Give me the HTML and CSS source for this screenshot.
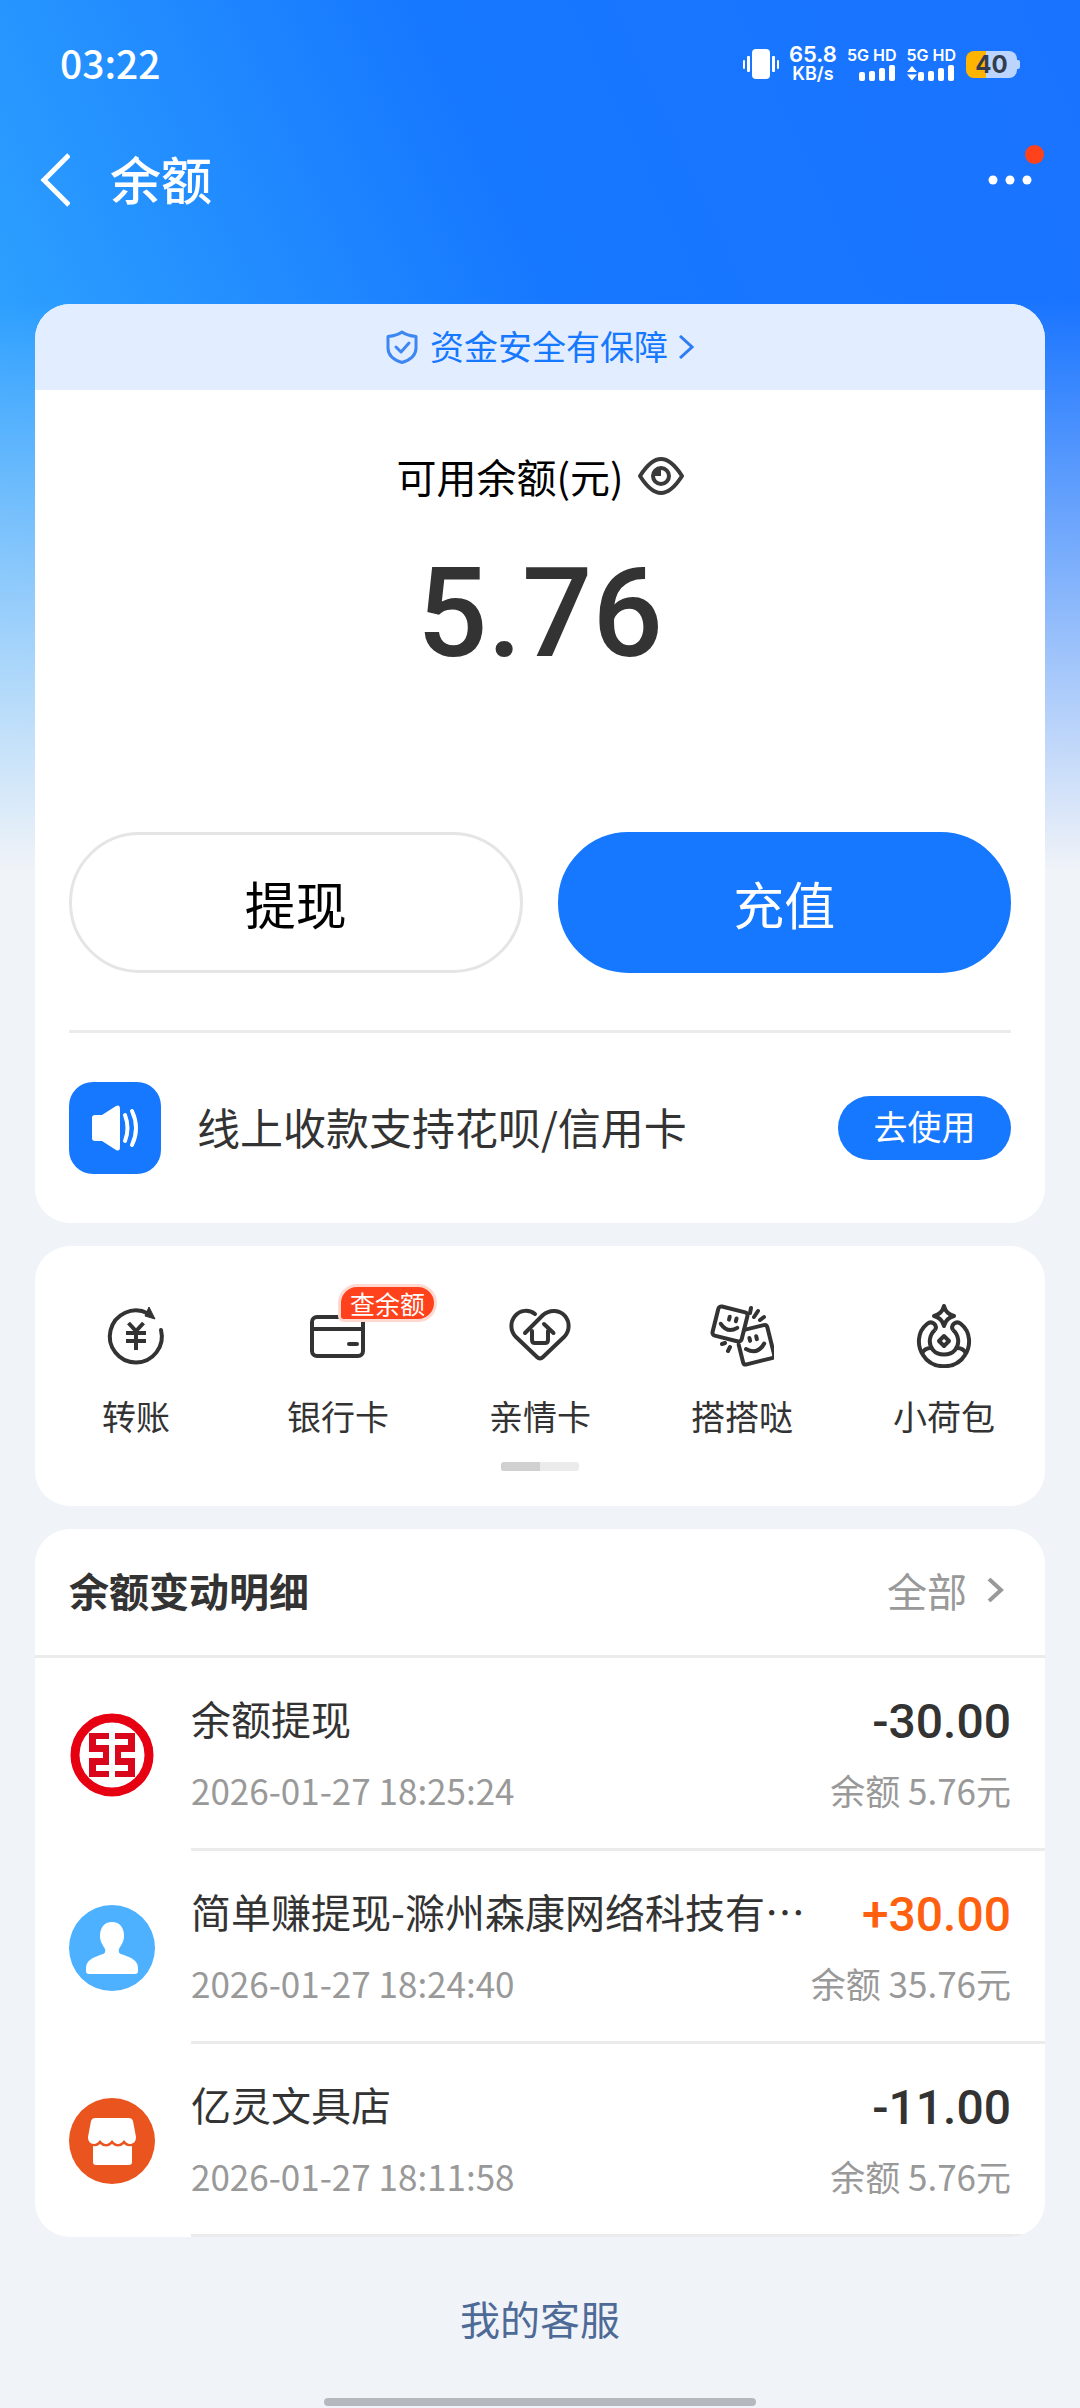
FILE: index.html
```html
<!DOCTYPE html>
<html lang="zh-CN">
<head>
<meta charset="utf-8">
<meta name="viewport" content="width=device-width, initial-scale=1">
<title>余额</title>
<link rel="stylesheet" href="styles.css">
</head>
<body>
<div class="page">
  <div class="status-bar">
    <time class="clock">03:22</time>
    <div class="status-icons">
      <svg class="vibrate" width="36" height="32" viewBox="0 0 36 32" fill="#fff" aria-hidden="true">
        <rect x="9" y="1" width="18" height="30" rx="4"/>
        <rect x="4" y="8" width="3" height="16" rx="1"/><rect x="29" y="8" width="3" height="16" rx="1"/>
        <rect x="0" y="12" width="2" height="9" rx="1"/><rect x="34" y="12" width="2" height="9" rx="1"/>
      </svg>
      <div class="speed"><span>65.8</span><span class="speed-unit">KB/s</span></div>
      <div class="signal">
        <span>5G HD</span>
        <svg width="48" height="16" viewBox="0 0 48 16" fill="#fff" aria-hidden="true">
          <rect x="12" y="7" width="6" height="9" rx="2"/><rect x="22" y="6" width="6" height="10" rx="2"/><rect x="32" y="3" width="6" height="13" rx="2"/><rect x="42" y="0" width="6" height="16" rx="2"/>
        </svg>
      </div>
      <div class="signal">
        <span>5G HD</span>
        <svg width="48" height="16" viewBox="0 0 48 16" fill="#fff" aria-hidden="true">
          <path d="M1 7L6 1l5 6zM1 9.500L6 15.500l5-6z"/>
          <rect x="12" y="7" width="6" height="9" rx="2"/><rect x="22" y="6" width="6" height="10" rx="2"/><rect x="32" y="3" width="6" height="13" rx="2"/><rect x="42" y="0" width="6" height="16" rx="2"/>
        </svg>
      </div>
      <div class="battery"><span class="battery-cell">40</span><span class="battery-tip"></span></div>
    </div>
  </div>

  <header class="nav">
    <button class="icon-button" type="button" aria-label="返回">
      <svg width="30" height="54" viewBox="0 0 30 54" fill="none" stroke="#fff" stroke-width="5" aria-hidden="true"><path d="M29 2L4 27l25 25"/></svg>
    </button>
    <h1 class="nav-title">余额</h1>
    <button class="icon-button more" type="button" aria-label="更多">
      <svg width="44" height="10" viewBox="0 0 44 10" fill="#fff" aria-hidden="true"><circle cx="5" cy="5" r="4.500"/><circle cx="22" cy="5" r="4.500"/><circle cx="39" cy="5" r="4.500"/></svg>
      <span class="dot"></span>
    </button>
  </header>

  <main class="content">
    <section class="card">
      <a class="banner" href="#">
        <svg class="shield" width="32" height="34" viewBox="0 0 32 34" fill="none" stroke="#3d87f3" stroke-width="3" stroke-linejoin="round" stroke-linecap="round" aria-hidden="true"><path d="M16 2C12 5 7 6 2 6.500V18c0 7 6 12 14 14.500C24 30 30 25 30 18V6.500C25 6 20 5 16 2z"/><path d="M10 17l5 5 8-9"/></svg>
        <span>资金安全有保障</span>
        <svg class="banner-arrow" width="16" height="24" viewBox="0 0 16 24" fill="none" stroke="#2e7df5" stroke-width="3" aria-hidden="true"><path d="M2 1l12 11L2 23"/></svg>
      </a>
      <div class="balance">
        <div class="balance-label">
          <span>可用余额(元)</span>
          <button class="icon-button" type="button" aria-label="隐藏余额">
            <svg width="46" height="38" viewBox="0 0 46 38" fill="none" stroke="#3a3a3a" stroke-width="4" stroke-linejoin="round" aria-hidden="true"><path d="M2 19C9 8 16 2 23 2s14 6 21 17C37 30 30 36 23 36S9 30 2 19z"/><circle cx="23" cy="19" r="8"/><path d="M16 12h7v7h-7z" fill="#3a3a3a" stroke="none"/></svg>
          </button>
        </div>
        <div class="balance-amount">5.76</div>
        <div class="actions">
          <button class="action" type="button">提现</button>
          <button class="action primary" type="button">充值</button>
        </div>
      </div>
      <div class="promo">
        <span class="promo-icon">
          <svg width="92" height="92" viewBox="0 0 92 92" aria-hidden="true"><path d="M26 33h7l14-9q4-2 4 3v38q0 5-4 3l-14-9h-7q-3 0-3-3V36q0-3 3-3z" fill="#fff"/><path d="M56 33q5 13 0 26M63 29q8 17 0 34" fill="none" stroke="#fff" stroke-width="4" stroke-linecap="round"/></svg>
        </span>
        <span class="promo-text">线上收款支持花呗/信用卡</span>
        <button class="promo-button" type="button">去使用</button>
      </div>
    </section>

    <section class="card shortcuts">
      <nav class="shortcut-list">
        <a class="shortcut" href="#">
          <svg width="64" height="64" viewBox="0 0 64 64" fill="none" stroke="#333" stroke-width="4" aria-hidden="true"><path d="M57 26A26 26 0 1 1 44 9.500" stroke-linecap="round"/><path d="M45 3l6 12-10-3z" fill="#333" stroke-width="1"/><path d="M24.500 19l7.500 8 7.500-8M32 27v19M22 29h20M22 37h20"/></svg>
          <span>转账</span>
        </a>
        <a class="shortcut" href="#">
          <svg width="64" height="64" viewBox="0 0 64 64" fill="none" stroke="#333" stroke-width="4" aria-hidden="true"><rect x="6" y="13" width="51" height="39" rx="5"/><path d="M6 25h51"/><path d="M43 40h8" stroke-linecap="round"/></svg>
          <span>银行卡</span>
          <span class="badge">查余额</span>
        </a>
        <a class="shortcut" href="#">
          <svg width="64" height="64" viewBox="0 0 64 64" fill="none" stroke="#333" stroke-width="4" stroke-linejoin="round" stroke-linecap="round" aria-hidden="true"><path d="M27 10C21 5 12 6 7 12s-5 15 1 21l21 20q3 3 6 0l21-20c6-6 6-15 1-21s-15-7-22-1L17 29"/><path d="M24 27v9q0 3 3 3h10q3 0 3-3v-9M36 20l9.500 9"/></svg>
          <span>亲情卡</span>
        </a>
        <a class="shortcut" href="#">
          <svg width="64" height="64" viewBox="0 0 64 64" fill="none" stroke="#333" stroke-width="4" stroke-linejoin="round" stroke-linecap="round" aria-hidden="true"><g transform="rotate(-14 44 40)"><path d="M38 24h20q3 0 3 3v28q0 3-3 3H32q-3 0-3-3V37"/><path d="M41 33v3M48 33v3"/><path d="M35 43q10 9 19-1"/></g><g transform="rotate(14 20 20)"><rect x="5" y="5" width="30" height="30" rx="3"/><path d="M18 13v3M25 13v3"/><path d="M11 22q9 8 17 0"/></g><path d="M41 4l-1 5M48 7l-4 6M54 13l-4 3M12 40l3-1M18 47l2-4"/></svg>
          <span>搭搭哒</span>
        </a>
        <a class="shortcut" href="#">
          <svg width="64" height="64" viewBox="0 0 64 64" fill="none" stroke="#333" stroke-width="4" stroke-linejoin="round" aria-hidden="true"><path d="M32 2q2 8 10 10-8 2-10 10-2-8-10-10 8-2 10-10z"/><path d="M23 26c3-5-3-10-8-6C5 28 5 42 11 51c9 15 33 15 42 0 6-9 6-23-4-31-5-4-11 1-8 6M23 26c-6 5-7 14-2 20s17 6 22 0 4-15-2-20"/><path d="M10 50q2-6 9-6M54 50q-2-6-9-6"/><path d="M32 32l5 5-5 5-5-5z"/></svg>
          <span>小荷包</span>
        </a>
      </nav>
      <div class="pager"><span class="pager-thumb"></span></div>
    </section>

    <section class="card records">
      <div class="records-head">
        <h2 class="records-title">余额变动明细</h2>
        <a class="records-all" href="#">全部
          <svg width="18" height="24" viewBox="0 0 18 24" fill="none" stroke="#999" stroke-width="4" aria-hidden="true"><path d="M2 1l12 11L2 23"/></svg>
        </a>
      </div>
      <ul class="record-list">
        <li class="record">
          <svg class="record-icon" width="86" height="86" viewBox="0 0 86 86" aria-hidden="true"><circle cx="43" cy="43" r="37" fill="none" stroke="#e60012" stroke-width="9"/><path d="M20 21h20v6H27v6h13v20H27v6h13v6H20V46h14v-6H20z" fill="#d9061c"/><path d="M66 21H46v6h13v6H46v20h13v6H46v6h20V46H52v-6h14z" fill="#d9061c"/></svg>
          <div class="record-body">
            <div class="record-main"><span class="record-name">余额提现</span><time class="record-sub">2026-01-27 18:25:24</time></div>
            <div class="record-side"><span class="record-amount">-30.00</span><span class="record-sub">余额 5.76元</span></div>
          </div>
        </li>
        <li class="record">
          <svg class="record-icon" width="86" height="86" viewBox="0 0 86 86" aria-hidden="true"><circle cx="43" cy="43" r="43" fill="#4db1ff"/><path d="M43 17c8 0 12 6 12 14 0 6-3 9-5 13-1 4 1 5 5 6 8 3 14 6 14 13v3q0 3-3 3H20q-3 0-3-3v-3c0-7 6-10 14-13 4-1 6-2 5-6-2-4-5-7-5-13 0-8 4-14 12-14z" fill="#fff"/></svg>
          <div class="record-body">
            <div class="record-main"><span class="record-name">简单赚提现-滁州森康网络科技有…</span><time class="record-sub">2026-01-27 18:24:40</time></div>
            <div class="record-side"><span class="record-amount income">+30.00</span><span class="record-sub">余额 35.76元</span></div>
          </div>
        </li>
        <li class="record">
          <svg class="record-icon" width="86" height="86" viewBox="0 0 86 86" aria-hidden="true"><circle cx="43" cy="43" r="43" fill="#e9541f"/><path d="M26 20h34q3 0 4 3l3 16c0 5-3 7-6 7q-3 0-6-4-3 4-6 4t-6-4q-3 4-6 4t-6-4q-3 4-6 4c-4 0-6-3-6-7l3-16q1-3 4-3z" fill="#fff"/><path d="M24 48q4 1 7-2 6 5 12 0 6 5 12 0 3 3 8 2v16q0 3-3 3H27q-3 0-3-3z" fill="#fff"/></svg>
          <div class="record-body">
            <div class="record-main"><span class="record-name">亿灵文具店</span><time class="record-sub">2026-01-27 18:11:58</time></div>
            <div class="record-side"><span class="record-amount">-11.00</span><span class="record-sub">余额 5.76元</span></div>
          </div>
        </li>
      </ul>
    </section>

    <a class="service" href="#">我的客服</a>
  </main>
  <div class="home-bar"></div>
</div>
</body>
</html>
```
FILE: styles.css
```css
* {
  box-sizing: border-box;
}

body {
  margin: 0;
  background: #f0f3f8;
  color: #333;
  font-family: "Noto Sans CJK SC", sans-serif;
  font-size: 40px;
}

a {
  color: inherit;
  text-decoration: none;
}

button {
  padding: 0;
  border: 0;
  background: none;
  color: inherit;
  font: inherit;
}

svg {
  display: block;
  flex: none;
}

.page {
  display: flex;
  flex-direction: column;
  min-height: 100vh;
  background:
    linear-gradient(to bottom, rgba(240, 243, 248, 0) 300px, #f0f3f8 870px) 0 0 / 100% 870px no-repeat,
    linear-gradient(65deg, #2fa5ff 0%, #2c9fff 18%, #1677ff 56%, #1a73ff 100%) 0 0 / 100% 870px no-repeat;
}

/* Status bar */
.status-bar {
  display: flex;
  align-items: center;
  justify-content: space-between;
  height: 128px;
  padding: 0 60px;
  color: #fff;
}

.clock {
  padding-bottom: 4px;
  font-size: 39px;
  font-weight: 500;
}

.status-icons {
  display: flex;
  align-items: center;
  gap: 10px;
  font-family: Inter, "Noto Sans CJK SC", sans-serif;
}

.speed {
  display: flex;
  flex-direction: column;
  align-items: center;
  font-size: 22px;
  font-weight: 600;
  line-height: 20px;
}

.speed-unit {
  font-size: 18px;
}

.signal {
  display: flex;
  flex-direction: column;
  gap: 2px;
  font-size: 16px;
  font-weight: 600;
  line-height: 16px;
  white-space: nowrap;
}

.battery {
  display: flex;
  align-items: center;
}

.battery-cell {
  width: 51px;
  border-radius: 8px;
  background: linear-gradient(to right, #ffb400 40%, #bcd5ff 40%);
  color: #333c4d;
  font-size: 24px;
  font-weight: 700;
  line-height: 27px;
  text-align: center;
}

.battery-tip {
  width: 3px;
  height: 9px;
  border-radius: 0 2px 2px 0;
  background: #bcd5ff;
}

/* Title bar */
.nav {
  display: flex;
  align-items: center;
  height: 104px;
  padding: 0 48px 0 40px;
  color: #fff;
}

.nav-title {
  flex: 1;
  margin: 0 0 0 40px;
  padding-bottom: 4px;
  font-size: 51px;
  font-weight: 500;
  line-height: 64px;
}

.more {
  position: relative;
}

.dot {
  position: absolute;
  top: -30px;
  right: -12px;
  width: 19px;
  height: 19px;
  border-radius: 50%;
  background: #ff411c;
}

/* Cards */
.content {
  display: flex;
  flex-direction: column;
  gap: 23px;
  padding: 72px 35px 0;
}

.card {
  overflow: hidden;
  border-radius: 35px;
  background: #fff;
}

.banner {
  display: flex;
  align-items: center;
  justify-content: center;
  height: 86px;
  background: #e2eeff;
  color: #1677ff;
  font-size: 34px;
}

.banner span {
  padding-bottom: 4px;
}

.shield {
  margin-right: 12px;
}

.banner-arrow {
  margin-left: 10px;
}

.balance {
  margin: 0 34px;
  padding: 58px 0 57px;
  border-bottom: 3px solid #ebebeb;
  text-align: center;
}

.balance-label {
  display: flex;
  align-items: center;
  justify-content: center;
  gap: 14px;
  color: #000;
  line-height: 56px;
}

.balance-amount {
  margin: 40px 0 148px;
  font-family: Roboto, "Noto Sans CJK SC", sans-serif;
  font-size: 124px;
  font-weight: 500;
  line-height: 140px;
}

.actions {
  display: grid;
  grid-template-columns: 1fr 1fr;
  gap: 35px;
}

.action {
  height: 141px;
  border: 3px solid #e5e5e5;
  border-radius: 71px;
  background: #fff;
  color: #000;
  font-size: 51px;
}

.action.primary {
  border-color: #1677ff;
  background: #1677ff;
  color: #fff;
}

.promo {
  display: flex;
  align-items: center;
  height: 190px;
  padding: 0 34px;
}

.promo-icon {
  border-radius: 24px;
  background: #1677ff;
}

.promo-text {
  flex: 1;
  margin-left: 36px;
  padding-bottom: 4px;
  font-size: 43px;
}

.promo-button {
  width: 173px;
  height: 64px;
  padding-bottom: 4px;
  border-radius: 32px;
  background: #1677ff;
  color: #fff;
  font-size: 34px;
  line-height: 60px;
}

/* Shortcuts */
.shortcuts {
  display: flex;
  flex-direction: column;
  align-items: center;
  padding: 58px 0 35px;
}

.shortcut-list {
  display: grid;
  grid-template-columns: repeat(5, 1fr);
  width: 100%;
}

.shortcut {
  position: relative;
  display: flex;
  flex-direction: column;
  align-items: center;
  gap: 24px;
  font-size: 34px;
  line-height: 48px;
}

.badge {
  position: absolute;
  top: -20px;
  left: 50%;
  padding: 0 9px;
  border: 3px solid #ffd9d0;
  border-radius: 20px 20px 20px 6px;
  background: #ff411c;
  color: #fff;
  font-size: 25px;
  line-height: 32px;
  white-space: nowrap;
}

.pager {
  width: 78px;
  height: 9px;
  margin-top: 22px;
  overflow: hidden;
  border-radius: 3px;
  background: #ebebeb;
}

.pager-thumb {
  display: block;
  width: 50%;
  height: 100%;
  background: #d0d0d0;
}

/* Balance records */
.records-head {
  display: flex;
  align-items: center;
  justify-content: space-between;
  height: 129px;
  padding: 0 40px 4px 34px;
  border-bottom: 3px solid #ebebeb;
}

.records-title {
  margin: 0;
  font-size: 40px;
  font-weight: 700;
}

.records-all {
  display: flex;
  align-items: center;
  gap: 20px;
  color: #999;
}

.record-list {
  margin: 0;
  padding: 0;
  list-style: none;
}

.record {
  display: flex;
  align-items: center;
  padding-left: 34px;
}

.record-body {
  display: flex;
  flex: 1;
  justify-content: space-between;
  min-width: 0;
  margin-left: 36px;
  padding: 32px 34px 34px 0;
  border-bottom: 3px solid #ebebeb;
}

.record-main,
.record-side {
  display: flex;
  flex-direction: column;
  justify-content: space-between;
  white-space: nowrap;
}

.record-side {
  align-items: flex-end;
}

.record-name {
  line-height: 56px;
}

.record-amount {
  font-family: Roboto, "Noto Sans CJK SC", sans-serif;
  font-size: 48px;
  font-weight: 500;
  line-height: 64px;
}

.record-amount.income {
  color: #ff6010;
}

.record-sub {
  margin-top: 12px;
  color: #999;
  font-size: 35px;
  line-height: 48px;
}

.service {
  align-self: center;
  margin-top: 30px;
  color: #4e6a97;
  line-height: 56px;
}

.home-bar {
  align-self: center;
  width: 40%;
  height: 8px;
  margin: auto 0 2px;
  border-radius: 4px;
  background: #b5b8be;
}
```
